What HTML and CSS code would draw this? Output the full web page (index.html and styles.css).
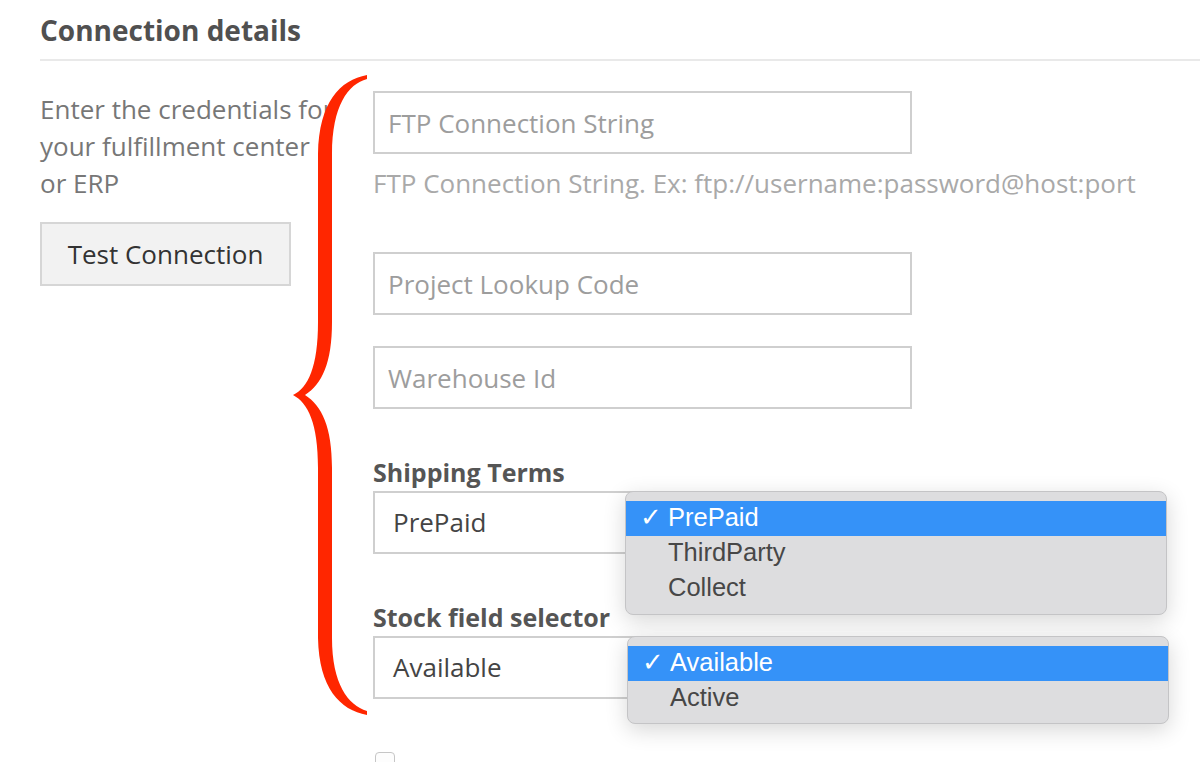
FILE: index.html
```html
<!DOCTYPE html>
<html lang="en">
<head>
    <meta charset="UTF-8">
    <meta name="viewport" content="width=device-width, initial-scale=1.0">
    <title>Connection details</title>
    <link rel="stylesheet" href="styles.css">
</head>
<body>
    <div class="page">
        <h2 class="section-title">Connection details</h2>

        <div class="section">
            <div class="intro">
                <p>Enter the credentials for your fulfillment center or ERP</p>
                <button class="btn">Test Connection</button>
            </div>

            <div class="fields">
                <input type="text" class="field" placeholder="FTP Connection String">
                <p class="help">FTP Connection String. Ex: ftp://username:password@host:port</p>

                <input type="text" class="field field-gap" placeholder="Project Lookup Code">
                <input type="text" class="field field-next" placeholder="Warehouse Id">

                <label class="label">Shipping Terms</label>
                <div class="select-wrap">
                    <div class="select">PrePaid</div>
                    <ul class="menu">
                        <li class="menu-item selected"><span class="tick">✓</span>PrePaid</li>
                        <li class="menu-item"><span class="tick"></span>ThirdParty</li>
                        <li class="menu-item"><span class="tick"></span>Collect</li>
                    </ul>
                </div>

                <label class="label">Stock field selector</label>
                <div class="select-wrap">
                    <div class="select">Available</div>
                    <ul class="menu menu-shift">
                        <li class="menu-item selected"><span class="tick">✓</span>Available</li>
                        <li class="menu-item"><span class="tick"></span>Active</li>
                    </ul>
                </div>

                <span class="checkbox"></span>
            </div>

            <!-- annotation brace drawn over the form -->
            <svg class="brace" width="80" height="646" viewBox="0 0 80 646">
                <path d="M77,3 C50,8 29,30 28,82 L28,250 C28,295 18,316 3,323 C18,331 28,351 28,396 L28,566 C29,616 50,638 77,643 L77,639 C58,633 42,612 42,566 L42,396 C42,355 32,334 15,323 C32,312 42,291 42,250 L42,82 C42,34 58,12 77,7 Z" fill="#ff2600"/>
            </svg>
        </div>
    </div>
</body>
</html>
```

FILE: styles.css
```css
body {
    margin: 0;
    font-family: "Open Sans", Arial, sans-serif;
    background-color: #ffffff;
    overflow: hidden;
}

.page {
    padding-left: 40px;
    height: 762px;
}

.section-title {
    margin: 0;
    padding-top: 12px;
    padding-bottom: 11px;
    font-size: 28px;
    line-height: 36px;
    font-weight: 700;
    color: #505050;
    border-bottom: 2px solid #e9e9e9;
}

.section {
    position: relative;
    display: grid;
    grid-template-columns: 295px 1fr;
    column-gap: 38px;
    padding-top: 30px;
}

.intro p {
    margin: 0;
    font-size: 26px;
    line-height: 37px;
    color: #777;
}

.btn {
    margin-top: 20px;
    width: 251px;
    height: 64px;
    background-color: #f2f2f2;
    border: 2px solid #d6d6d6;
    font-family: "Open Sans", Arial, sans-serif;
    font-size: 26px;
    color: #333;
    padding: 0;
}

.fields {
    display: flex;
    flex-direction: column;
    align-items: flex-start;
}

.field {
    box-sizing: border-box;
    width: 539px;
    height: 63px;
    margin: 0;
    padding: 0 13px;
    border: 2px solid #cfcfcf;
    font-family: "Open Sans", Arial, sans-serif;
    font-size: 26px;
    color: #444;
    outline: none;
}

.field::placeholder {
    color: #9d9d9d;
}

.field-gap {
    margin-top: 50px;
}

.field-next {
    margin-top: 31px;
}

.help {
    margin: 11px 0 0;
    font-size: 26px;
    line-height: 37px;
    color: #a9a9a9;
    white-space: nowrap;
}

.label {
    display: block;
    margin-top: 45px;
    font-size: 25px;
    line-height: 37px;
    font-weight: 700;
    color: #555;
}

.select-wrap {
    position: relative;
}

.select {
    box-sizing: border-box;
    width: 539px;
    height: 63px;
    padding: 0 18px;
    border: 2px solid #cfcfcf;
    background: #fff;
    font-size: 26px;
    line-height: 59px;
    color: #444;
}

.menu {
    position: absolute;
    top: 0;
    left: 252px;
    width: 542px;
    box-sizing: border-box;
    margin: 0;
    padding: 9px 0 8px;
    list-style: none;
    background-color: #dddddf;
    border: 1px solid #c4c4c6;
    border-radius: 8px;
    box-shadow: 0 6px 22px rgba(0, 0, 0, 0.16);
    font-family: "Liberation Sans", Arial, sans-serif;
    font-size: 25.5px;
    color: #474747;
}

.menu-shift {
    left: 254px;
    padding-bottom: 7px;
}

.menu-item {
    height: 35px;
    line-height: 33px;
    padding-left: 14px;
    white-space: nowrap;
}

.menu-item.selected {
    background-color: #3592f8;
    color: #fff;
}

.tick {
    display: inline-block;
    width: 28px;
    font-family: "DejaVu Sans", sans-serif;
    font-size: 26px;
    font-weight: 700;
}

.checkbox {
    display: block;
    margin-top: 53px;
    margin-left: 2px;
    width: 18px;
    height: 18px;
    border: 1px solid #c6c6c6;
    border-radius: 4px;
    background: #fdfdfd;
}

.brace {
    position: absolute;
    left: 250px;
    top: 11px;
}
```
